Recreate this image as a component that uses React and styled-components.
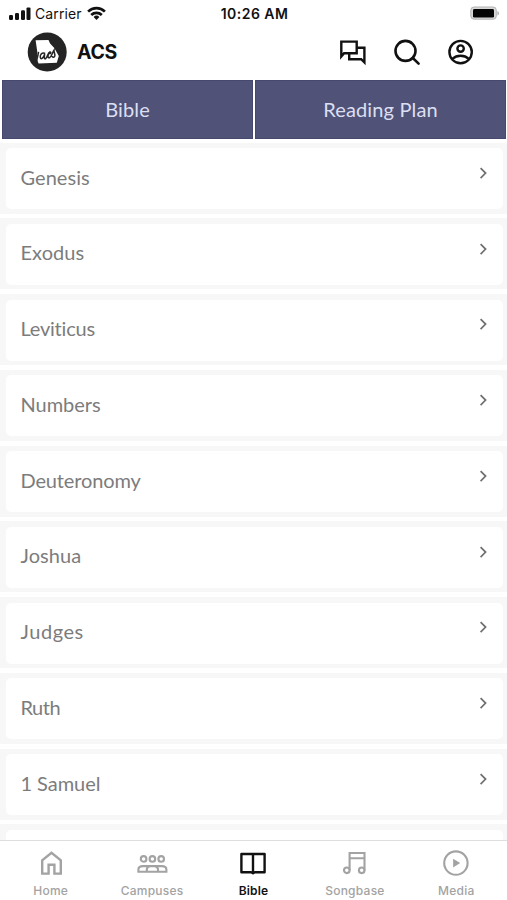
import React, { useState } from 'react';
import styled, { createGlobalStyle } from 'styled-components';

const GlobalStyle = createGlobalStyle`
    * {
        box-sizing: border-box;
    }

    body {
        margin: 0;
        background: #fff;
        font-family: Inter, 'Liberation Sans', sans-serif;
    }

    button {
        margin: 0;
        padding: 0;
        border: 0;
        background: none;
        font: inherit;
    }

    svg {
        display: block;
        flex: none;
    }
`;

const Screen = styled.div`
    display: flex;
    flex-direction: column;
    width: 507px;
    height: 900px;
    overflow: hidden;
    background: #fff;
`;

const StatusBar = styled.div`
    display: grid;
    grid-template-columns: 1fr auto 1fr;
    align-items: center;
    height: 27px;
    padding: 0 7px 0 9px;
    color: #111;
`;

const Carrier = styled.div`
    display: flex;
    align-items: center;
    font-size: 14px;
    letter-spacing: 0.1px;

    span {
        margin: 0 5px 0 4px;
    }
`;

const Clock = styled.div`
    font-size: 14px;
    font-weight: 600;
    letter-spacing: 0.45px;
`;

const Battery = styled.div`
    justify-self: end;
`;

const Header = styled.header`
    display: flex;
    align-items: center;
    height: 50px;
    padding: 0 32px 0 27px;
`;

const Title = styled.h1`
    flex: 1;
    margin: 0 0 0 10px;
    font-size: 19.5px;
    line-height: 24px;
    font-weight: 700;
    letter-spacing: -0.3px;
    color: #111;
`;

const Actions = styled.div`
    display: flex;
    gap: 26px;
`;

const Tabs = styled.div`
    display: flex;
    gap: 2px;
    flex: none;
    height: 63px;
    padding: 3px 1px 1px 2px;
`;

const Tab = styled.button`
    flex: 1;
    padding-bottom: 2px;
    background: #505377;
    border: 1px solid #45486f;
    color: #dcdff2;
    font-family: Lato, 'Liberation Sans', sans-serif;
    font-size: 20px;
    letter-spacing: 0.15px;
`;

const List = styled.div`
    flex: 1;
    min-height: 0;
    overflow: hidden;
    padding-top: 2.5px;
`;

const Row = styled.div`
    height: 71px;
    margin-bottom: 4.75px;
    padding: 5.5px 4px 4.5px 6px;
    background: #f7f7f7;
`;

const Card = styled.div`
    display: flex;
    justify-content: space-between;
    height: 61px;
    padding: 16.6px 14px 0 14.5px;
    border-radius: 5px;
    background: #fff;
    color: #7c7c7c;

    svg {
        margin-top: 1.4px;
    }
`;

const Book = styled.span`
    font-family: Lato, 'Liberation Sans', sans-serif;
    font-size: 20px;
    line-height: 24px;
    letter-spacing: ${({ $tracking = 0 }) => $tracking}px;
`;

const NavBar = styled.nav`
    display: grid;
    grid-template-columns: repeat(5, 1fr);
    flex: none;
    height: 60px;
    border-top: 1px solid #dedede;
    background: #fff;
`;

const NavItem = styled.button`
    display: flex;
    flex-direction: column;
    align-items: center;
    padding-top: 8px;
    color: ${({ $active }) => ($active ? '#111' : '#a3a3a3')};
    font-size: 12px;
    line-height: 16px;
    font-weight: ${({ $active }) => ($active ? 600 : 500)};
    letter-spacing: ${({ $active }) => ($active ? '0.1px' : '0.25px')};

    span {
        margin-top: 6px;
    }
`;

const SignalIcon = () => (
    <svg width="22" height="15" viewBox="0 0 22 15" fill="#111">
        <rect x="0" y="9" width="4" height="5" rx="1.2" />
        <rect x="6" y="7" width="4" height="7" rx="1.2" />
        <rect x="12" y="4.2" width="4" height="9.8" rx="1.2" />
        <rect x="17.5" y="1.4" width="4" height="12.6" rx="1.2" />
    </svg>
);

const WifiIcon = () => (
    <svg width="19" height="15" viewBox="0 0 19 15" fill="none" stroke="#111" strokeWidth="2.7">
        <path d="M1.1 5.6a12 12 0 0 1 16.8 0" />
        <path d="M4.2 9a7.7 7.7 0 0 1 10.6 0" />
        <path d="M9.5 14l-2.9-3a4.1 4.1 0 0 1 5.8 0z" fill="#111" stroke="none" />
    </svg>
);

const BatteryIcon = () => (
    <svg width="31" height="15" viewBox="0 0 31 15">
        <rect x="1.8" y="1" width="25.5" height="12.2" rx="3.2" fill="#d8d8d8" stroke="#b4b4b4" />
        <rect x="4" y="3" width="21" height="8.6" rx="1.4" fill="#050505" />
        <path d="M28.4 5v4.6c2.2-1 2.2-3.6 0-4.6z" fill="#b0b0b0" />
    </svg>
);

const Logo = () => (
    <svg width="40" height="40" viewBox="0 0 40 40">
        <circle cx="20.2" cy="20" r="19.5" fill="#242424" />
        <path d="M8.6 8.3l12.9-.4 1.6 3.6 4.2 4.4 4.5 8.2-2 6.6-18.2.9-1.8-4.6.6-6.4z" fill="#fff" />
        <path
            d="M11.5 20.5l-1.8 8M17.6 21.3c-2.8-.9-4.8 1.6-4.3 4.4.5 2.5 3.5-.1 4.4-3.7-.6 2.6-.6 5.6.9 4.7 1.9-1.3 2-6 4.2-6.7 1.4-.4 1.1 1.2.3 1.7M22.2 20.8c-1.8 2.6-1.6 6 .6 4.7 2.1-1.4 2.6-4.9 4.2-7.3-.2 2.5 1.5 4 .8 5.9-.5 1.5-2 1.3-2.8.4"
            fill="none"
            stroke="#242424"
            strokeWidth="1.5"
            strokeLinecap="round"
        />
    </svg>
);

const ChatIcon = () => (
    <svg width="28" height="28" viewBox="0 0 28 28" fill="none" stroke="#111" strokeWidth="2.4">
        <path d="M2.3 18.5V3.6h15.4v11.6H5.1z" />
        <path d="M18 9.8h7.4v14.6l-3.2-3.2H10.2V16" />
    </svg>
);

const SearchIcon = () => (
    <svg width="28" height="28" viewBox="0 0 28 28" fill="none" stroke="#111" strokeWidth="2.6">
        <circle cx="12.5" cy="12.9" r="10" />
        <path d="M19.8 20l5.8 5.6" strokeLinecap="round" />
    </svg>
);

const ProfileIcon = () => (
    <svg width="28" height="28" viewBox="0 0 28 28" fill="none" stroke="#111" strokeWidth="2.4">
        <circle cx="13.6" cy="14.1" r="11.2" />
        <circle cx="13.6" cy="10.6" r="3.2" />
        <path d="M5.4 20.8c4.5-4.1 11.9-4.1 16.4 0" />
    </svg>
);

const Chevron = () => (
    <svg width="10" height="14" viewBox="0 0 10 14" fill="none" stroke="#707070" strokeWidth="1.7">
        <path d="M1.6 2.1l5 5-5 5" />
    </svg>
);

const HomeIcon = () => (
    <svg width="32" height="28" viewBox="0 0 32 28" fill="none" stroke="currentColor" strokeWidth="2.4">
        <path d="M7.2 24.6V11.4l9.3-7.5 9.3 7.5v13.2h-6.4v-8.8h-5.8v8.8z" />
    </svg>
);

const CampusesIcon = () => (
    <svg width="32" height="28" viewBox="0 0 32 28" fill="none" stroke="currentColor" strokeWidth="2.1">
        <circle cx="7.6" cy="9.9" r="2.8" />
        <circle cx="16.4" cy="9.9" r="2.8" />
        <circle cx="25.2" cy="9.9" r="2.8" />
        <path d="M2.4 22.8v-2.2c0-2.3 2-3.5 4.6-3.5h18.8c2.6 0 4.6 1.2 4.6 3.5v2.2z" />
        <path d="M10.8 22.8v-2.2c0-2.1 1.8-3.1 3-3.5M22 22.8v-2.2c0-2.1-1.8-3.1-3-3.5" />
    </svg>
);

const BookIcon = () => (
    <svg width="32" height="28" viewBox="0 0 32 28" fill="none" stroke="currentColor" strokeWidth="2.4" strokeLinejoin="round">
        <path d="M4.4 5h23.2v18.2h-9.8L16 24.3l-1.8-1.1H4.4z" />
        <path d="M16 5v19" />
    </svg>
);

const MusicIcon = () => (
    <svg width="32" height="28" viewBox="0 0 32 28" fill="none" stroke="currentColor" strokeWidth="2.1">
        <circle cx="7.8" cy="21.3" r="2.8" />
        <circle cx="22.7" cy="21.3" r="2.8" />
        <path d="M10.6 21.3V4h14.9v17.3M10.6 9.3h14.9" />
    </svg>
);

const PlayIcon = () => (
    <svg width="32" height="28" viewBox="0 0 32 28">
        <circle cx="15.9" cy="14.1" r="11.7" fill="none" stroke="currentColor" strokeWidth="2.1" />
        <path d="M13.1 9.8l7.1 4.3-7.1 4.3z" fill="currentColor" />
    </svg>
);

const books = [
    { name: 'Genesis', tracking: 0.05 },
    { name: 'Exodus', tracking: 0.05 },
    { name: 'Leviticus', tracking: -0.22 },
    { name: 'Numbers', tracking: -0.03 },
    { name: 'Deuteronomy', tracking: -0.14 },
    { name: 'Joshua', tracking: 0.05 },
    { name: 'Judges', tracking: 0.55 },
    { name: 'Ruth', tracking: -0.5 },
    { name: '1 Samuel', tracking: -0.05 },
    { name: '' },
];

const navItems = [
    { label: 'Home', Icon: HomeIcon },
    { label: 'Campuses', Icon: CampusesIcon },
    { label: 'Bible', Icon: BookIcon },
    { label: 'Songbase', Icon: MusicIcon },
    { label: 'Media', Icon: PlayIcon },
];

const App = () => {
    const [activeNav, setActiveNav] = useState('Bible');

    return (
        <>
            <GlobalStyle />
            <Screen>
                <StatusBar>
                    <Carrier>
                        <SignalIcon />
                        <span>Carrier</span>
                        <WifiIcon />
                    </Carrier>
                    <Clock>10:26 AM</Clock>
                    <Battery>
                        <BatteryIcon />
                    </Battery>
                </StatusBar>
                <Header>
                    <Logo />
                    <Title>ACS</Title>
                    <Actions>
                        <ChatIcon />
                        <SearchIcon />
                        <ProfileIcon />
                    </Actions>
                </Header>
                <Tabs>
                    <Tab>Bible</Tab>
                    <Tab>Reading Plan</Tab>
                </Tabs>
                <List>
                    {books.map((book) => (
                        <Row key={book.name}>
                            <Card>
                                <Book $tracking={book.tracking}>{book.name}</Book>
                                <Chevron />
                            </Card>
                        </Row>
                    ))}
                </List>
                <NavBar>
                    {navItems.map(({ label, Icon }) => (
                        <NavItem
                            key={label}
                            $active={activeNav === label}
                            onClick={() => setActiveNav(label)}
                        >
                            <Icon />
                            <span>{label}</span>
                        </NavItem>
                    ))}
                </NavBar>
            </Screen>
        </>
    );
};

export default App;
